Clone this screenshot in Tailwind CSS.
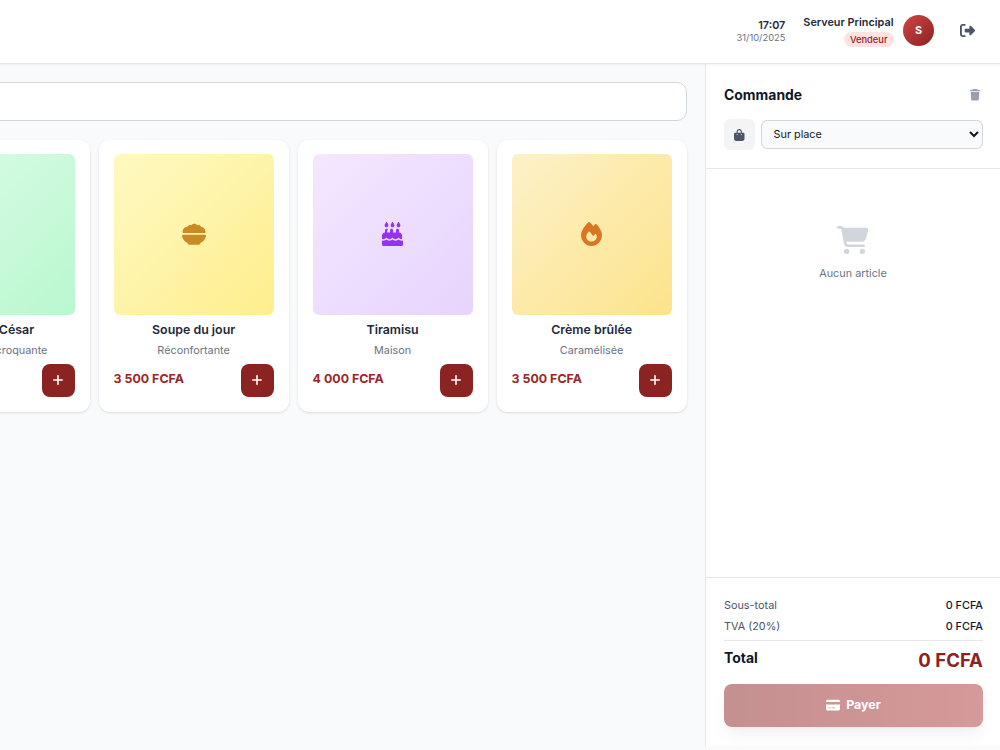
<!DOCTYPE html>
<html lang="fr">
<head>
  <meta charset="UTF-8" />
  <meta name="viewport" content="width=device-width, initial-scale=1.0" />
  <title>Caisse</title>
  <script src="https://cdn.jsdelivr.net/npm/@tailwindcss/browser@4"></script>
</head>
<body class="h-[750px] overflow-hidden bg-gray-50 font-[Inter,sans-serif] text-gray-800">
  <!-- Header -->
  <header class="relative z-10 flex h-16 items-center justify-end border-b border-gray-200 bg-white pr-[25px] pb-[2px] shadow-xs">
    <div class="mr-[18px] text-right">
      <div class="text-[10.85px] leading-[14px] font-semibold">17:07</div>
      <div class="text-[9.3px] leading-[12px] text-gray-500">31/10/2025</div>
    </div>
    <div class="mr-[9.5px] flex flex-col items-end">
      <div class="text-[10.85px] leading-[14px] font-semibold">Serveur Principal</div>
      <div class="mt-[3px] h-[15px] rounded-full bg-red-100 px-[6px] text-[9.3px] leading-[15px] font-medium text-[#991b1b]">Vendeur</div>
    </div>
    <div class="mr-[26px] flex size-[31px] items-center justify-center rounded-full bg-linear-to-br from-[#d14545] to-[#8b2222] text-[10.85px] font-bold text-white">S</div>
    <svg class="mb-px h-[15px] w-[15px] fill-gray-600" viewBox="0 0 512 512"><path d="M377.9 105.9L500.7 228.7c7.2 7.2 11.3 17.1 11.3 27.3s-4.1 20.1-11.3 27.3L377.9 406.1c-6.4 6.4-15 9.9-24 9.9c-18.7 0-33.9-15.2-33.9-33.9l0-62.1-128 0c-17.7 0-32-14.3-32-32l0-64c0-17.7 14.3-32 32-32l128 0 0-62.1c0-18.7 15.2-33.9 33.9-33.9c9 0 17.6 3.6 24 9.9zM160 96L96 96c-17.7 0-32 14.3-32 32l0 256c0 17.7 14.3 32 32 32l64 0c17.7 0 32 14.3 32 32s-14.3 32-32 32l-64 0c-53 0-96-43-96-96L0 128C0 75 43 32 96 32l64 0c17.7 0 32 14.3 32 32s-14.3 32-32 32z"/></svg>
  </header>

  <div class="flex h-[682px]">
    <!-- Products -->
    <main class="flex w-[705px] flex-col items-end overflow-hidden pt-[18px] pr-[18px]">
      <div class="h-[39px] w-[786px] shrink-0 rounded-[10px] border border-gray-300 bg-white"></div>

      <div class="mt-[18.6px] mr-[0.4px] grid w-[787px] shrink-0 grid-cols-4 gap-[9px]">
        <div class="rounded-[11px] bg-white p-[15px] pt-[14.5px] shadow-sm">
          <div class="h-[160.5px] rounded-md bg-linear-to-br from-green-100 to-green-200"></div>
          <h3 class="mt-[6px] text-center text-[12.4px] leading-[18px] font-semibold">Salade César</h3>
          <p class="mt-[3px] text-center text-[10.85px] leading-4 text-gray-500">Fraîche et croquante</p>
          <div class="mt-[6px] flex items-center justify-between">
            <span class="pb-[2px] text-[12.4px] font-bold text-[#9b2626]">4 500 FCFA</span>
            <button class="flex size-[33px] items-center justify-center rounded-lg bg-[#8b2323]"><svg class="size-[10px] stroke-white stroke-[1.6]" viewBox="0 0 10 10" stroke-linecap="round"><path d="M5 .8v8.4M.8 5h8.4"/></svg></button>
          </div>
        </div>

        <div class="rounded-[11px] bg-white p-[15px] pt-[14.5px] shadow-sm">
          <div class="flex h-[160.5px] items-center justify-center rounded-md bg-linear-to-br from-yellow-100 to-[#feee8c]">
            <!-- bowl -->
            <svg class="mb-px size-6 fill-[#ca8a24]" viewBox="0 0 24 24"><path d="M.8 11C0 7.500 2.500 4.800 5.400 4.700 6.200 3 8.200 2.500 9.600 3.200 11 1.300 14 1.300 15 3.200c2-.5 3.600.2 4 1.600 3 .1 5 2.700 4.300 6.200zM1 12.700h22c1 0 1.200.8.9 1.800-.8 3-2.700 5.200-5.400 6.500-.3 1.200-1 1.800-2.100 1.800H7.600c-1.100 0-1.800-.6-2.100-1.800C2.800 19.700.9 17.500.1 14.500c-.3-1 0-1.800.9-1.800z"/></svg>
          </div>
          <h3 class="mt-[6px] text-center text-[12.4px] leading-[18px] font-semibold">Soupe du jour</h3>
          <p class="mt-[3px] text-center text-[10.85px] leading-4 text-gray-500">Réconfortante</p>
          <div class="mt-[6px] flex items-center justify-between">
            <span class="pb-[2px] text-[12.4px] font-bold text-[#9b2626]">3 500 FCFA</span>
            <button class="flex size-[33px] items-center justify-center rounded-lg bg-[#8b2323]"><svg class="size-[10px] stroke-white stroke-[1.6]" viewBox="0 0 10 10" stroke-linecap="round"><path d="M5 .8v8.4M.8 5h8.4"/></svg></button>
          </div>
        </div>

        <div class="rounded-[11px] bg-white p-[15px] pt-[14.5px] shadow-sm">
          <div class="flex h-[160.5px] items-center justify-center rounded-md bg-linear-to-br from-purple-100 to-[#e7d4fd]">
            <!-- cake -->
            <svg class="mb-px h-6 w-[21px] fill-[#9333ea]" viewBox="0 0 448 512"><path d="M86 6L62 48c-4 6-6 14-6 21v3c0 22 18 40 40 40s40-18 40-40v-3c0-7-2-15-6-21L106 6c-5-8-15-8-20 0zm128 0l-24 42c-4 6-6 14-6 21v3c0 22 18 40 40 40s40-18 40-40v-3c0-7-2-15-6-21L234 6c-5-8-15-8-20 0zm128 0l-24 42c-4 6-6 14-6 21v3c0 22 18 40 40 40s40-18 40-40v-3c0-7-2-15-6-21L362 6c-5-8-15-8-20 0zM128 176c0-18-14-32-32-32s-32 14-32 32v48c-35 0-64 29-64 64v71c8 5 18 9 29 9 22 0 43-15 55-26 7-8 17-8 24 0 10 11 30 26 52 26s42-15 52-26c7-8 17-8 24 0 10 11 30 26 52 26s42-15 52-26c7-8 17-8 24 0 12 11 23 26 45 26 11 0 11-4 19-9v-71c0-35-29-64-64-64v-48c0-18-14-32-32-32s-32 14-32 32v48h-64v-48c0-18-14-32-32-32s-32 14-32 32v48h-64v-48zm320 219c-9 3-18 5-29 5-27 0-51-13-67-25-16 12-38 25-64 25s-48-13-64-25c-16 12-38 25-64 25s-48-13-64-25c-16 12-40 25-67 25-11 0-20-2-29-5v85c0 18 14 32 32 32h384c18 0 32-14 32-32v-85z"/></svg>
          </div>
          <h3 class="mt-[6px] text-center text-[12.4px] leading-[18px] font-semibold">Tiramisu</h3>
          <p class="mt-[3px] text-center text-[10.85px] leading-4 text-gray-500">Maison</p>
          <div class="mt-[6px] flex items-center justify-between">
            <span class="pb-[2px] text-[12.4px] font-bold text-[#9b2626]">4 000 FCFA</span>
            <button class="flex size-[33px] items-center justify-center rounded-lg bg-[#8b2323]"><svg class="size-[10px] stroke-white stroke-[1.6]" viewBox="0 0 10 10" stroke-linecap="round"><path d="M5 .8v8.4M.8 5h8.4"/></svg></button>
          </div>
        </div>

        <div class="rounded-[11px] bg-white p-[15px] pt-[14.5px] shadow-sm">
          <div class="flex h-[160.5px] items-center justify-center rounded-md bg-linear-to-br from-[#fdf1c7] to-[#fce38a]">
            <!-- flame -->
            <svg class="mb-px h-6 w-[21px] fill-[#d97720]" viewBox="0 0 448 512"><path d="M159.3 5.4c7.8-7.3 19.9-7.2 27.7 .1c27.6 25.9 53.5 53.8 77.7 84c11-14.4 23.5-30.1 37-42.9c7.9-7.4 20.1-7.4 28 .1c34.6 33 63.9 76.6 84.5 118c20.3 40.8 33.8 82.5 33.8 111.9C448 404.2 348.2 512 224 512C98.4 512 0 404.1 0 276.5c0-38.4 17.8-85.3 45.4-131.7C73.3 97.7 112.7 48.6 159.3 5.4zM225.7 416c25.3 0 47.7-7 68.8-21c42.1-29.4 53.4-88.2 28.1-134.4c-4.5-9-16-9.6-22.5-2l-25.2 29.3c-6.6 7.6-18.5 7.4-24.7-.5c-16.5-21-46-58.5-62.8-79.8c-6.3-8-18.3-8.1-24.7-.1c-33.8 42.5-50.8 69.3-50.8 99.4C112 375.4 162.6 416 225.7 416z"/></svg>
          </div>
          <h3 class="mt-[6px] text-center text-[12.4px] leading-[18px] font-semibold">Crème brûlée</h3>
          <p class="mt-[3px] text-center text-[10.85px] leading-4 text-gray-500">Caramélisée</p>
          <div class="mt-[6px] flex items-center justify-between">
            <span class="pb-[2px] text-[12.4px] font-bold text-[#9b2626]">3 500 FCFA</span>
            <button class="flex size-[33px] items-center justify-center rounded-lg bg-[#8b2323]"><svg class="size-[10px] stroke-white stroke-[1.6]" viewBox="0 0 10 10" stroke-linecap="round"><path d="M5 .8v8.4M.8 5h8.4"/></svg></button>
          </div>
        </div>
      </div>
    </main>

    <!-- Order panel -->
    <aside class="flex w-[295px] flex-col border-l border-gray-200 bg-white">
      <div class="h-[105px] border-b border-gray-200 pt-5 pr-[17px] pl-[18px]">
        <div class="flex items-center justify-between pr-[3.5px]">
          <h2 class="text-[13.95px] leading-[22px] font-bold text-gray-900">Commande</h2>
          <svg class="h-[11.5px] w-[10px] fill-gray-400" viewBox="0 0 448 512"><path d="M135.2 17.7L128 32 32 32C14.3 32 0 46.3 0 64S14.3 96 32 96l384 0c17.7 0 32-14.3 32-32s-14.3-32-32-32l-96 0-7.2-14.3C307.4 6.8 296.3 0 284.2 0L163.8 0c-12.1 0-23.2 6.8-28.6 17.7zM416 128L32 128 53.2 467c1.6 25.3 22.6 45 47.9 45l245.8 0c25.3 0 46.3-19.7 47.9-45L416 128z"/></svg>
        </div>
        <div class="mt-[13px] flex items-center gap-[6px]">
          <div class="flex size-[31px] items-center justify-center rounded-md bg-gray-100">
            <svg class="h-[12px] w-[10.5px] fill-gray-600" viewBox="0 0 448 512"><path d="M160 112c0-35.3 28.7-64 64-64s64 28.7 64 64l0 48-128 0 0-48zm-48 48l-64 0c-26.5 0-48 21.5-48 48L0 416c0 53 43 96 96 96l256 0c53 0 96-43 96-96l0-208c0-26.5-21.5-48-48-48l-64 0 0-48C336 50.1 285.9 0 224 0S112 50.1 112 112l0 48zm24 48a24 24 0 1 1 0 48 24 24 0 1 1 0-48zm152 24a24 24 0 1 1 48 0 24 24 0 1 1 -48 0z"/></svg>
          </div>
          <select class="h-[37.4px] flex-1 rounded-lg border border-gray-300 bg-gray-50 pl-[11px] text-[14px] text-gray-900 [zoom:0.775]">
            <option>Sur place</option>
          </select>
        </div>
      </div>

      <div class="flex flex-1 flex-col items-center pt-[57px]">
        <svg class="h-[28px] w-[31.5px] fill-gray-300" viewBox="0 0 576 512"><path d="M0 24C0 10.7 10.7 0 24 0L69.5 0c22 0 41.5 12.8 50.6 32l411 0c26.3 0 45.5 25 38.6 50.4l-41 152.3c-8.5 31.4-37 53.3-69.5 53.3l-288.5 0 5.4 28.5c2.2 11.3 12.1 19.5 23.6 19.5L488 336c13.3 0 24 10.7 24 24s-10.7 24-24 24l-288.3 0c-34.6 0-64.3-24.6-70.7-58.5L77.4 54.5c-.7-3.8-4-6.5-7.9-6.5L24 48C10.7 48 0 37.3 0 24zM128 464a48 48 0 1 1 96 0 48 48 0 1 1 -96 0zm336-48a48 48 0 1 1 0 96 48 48 0 1 1 0-96z"/></svg>
        <p class="mt-[11px] text-[10.85px] leading-4 text-gray-500">Aucun article</p>
      </div>

      <!-- Totals -->
      <div class="h-[169px] border-t border-gray-200 pt-[19px] pr-[17px] pl-[18px]">
        <div class="flex justify-between text-[10.85px] leading-4">
          <span class="text-gray-600">Sous-total</span>
          <span class="font-medium text-gray-900">0 FCFA</span>
        </div>
        <div class="mt-[5px] flex justify-between text-[10.85px] leading-4">
          <span class="text-gray-600">TVA (20%)</span>
          <span class="font-medium text-gray-900">0 FCFA</span>
        </div>
        <div class="mt-[6px] flex justify-between border-t border-gray-200 pt-[6px]">
          <span class="text-[13.95px] leading-[22px] font-bold text-gray-900">Total</span>
          <span class="text-[18.6px] leading-[26px] font-bold text-[#8b2323]">0 FCFA</span>
        </div>
        <button class="mt-[11px] flex h-[43px] w-full items-center justify-center gap-[6px] rounded-lg bg-linear-to-r from-[#8b2323] to-[#b03535] text-[12.4px] font-bold text-white opacity-50 shadow-lg">
          <svg class="h-[12.4px] w-[14px] fill-white" viewBox="0 0 576 512"><path d="M64 32C28.7 32 0 60.7 0 96l0 32 576 0 0-32c0-35.3-28.7-64-64-64L64 32zM576 224L0 224 0 416c0 35.3 28.7 64 64 64l448 0c35.3 0 64-28.7 64-64l0-192zM112 352l64 0c8.8 0 16 7.2 16 16s-7.2 16-16 16l-64 0c-8.8 0-16-7.2-16-16s7.2-16 16-16zm112 16c0-8.8 7.2-16 16-16l128 0c8.8 0 16 7.2 16 16s-7.2 16-16 16l-128 0c-8.8 0-16-7.2-16-16z"/></svg>
          Payer
        </button>
      </div>
    </aside>
  </div>
</body>
</html>
